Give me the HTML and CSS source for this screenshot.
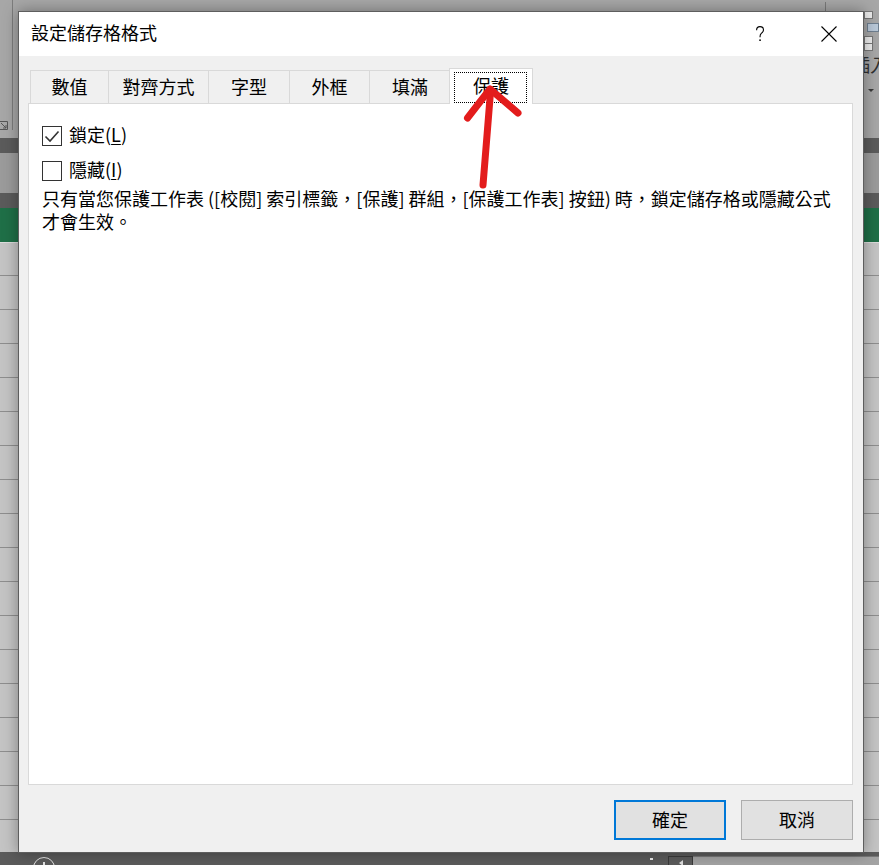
FILE: index.html
```html
<!DOCTYPE html>
<html lang="zh-Hant">
<head>
<meta charset="utf-8">
<title>設定儲存格格式</title>
<link rel="stylesheet" href="styles.css">
</head>
<body>
<div class="app">
  <div class="ribbon">
    <div class="rb-left">
      <svg class="rb-launch" width="8" height="10" viewBox="0 0 8 10"><path d="M0 1.5H7.5V9.5H0" fill="none" stroke="#555" stroke-width="1"/><path d="M1 3L6 8M6 5V8H3" fill="none" stroke="#555" stroke-width="1"/></svg>
      <div class="rb-vline"></div>
    </div>
    <div class="rb-mid"><div class="rb-tick"></div></div>
    <div class="rb-right">
      <div class="mini"></div>
      <div class="mini blue"></div>
      <div class="mini gap"></div>
      <div class="mini stack"></div>
      <div class="rb-text">插入</div>
      <div class="rb-caret"></div>
    </div>
  </div>
  <div class="band dark"></div>
  <div class="band formula"></div>
  <div class="band dark"></div>
  <div class="band green"></div>
  <div class="rows"></div>
  <div class="status">
    <div class="add-sheet"><span></span></div>
    <div class="st-dash"></div>
    <div class="st-box"><span></span></div>
    <div class="st-scroll"></div>
  </div>
</div>

<div class="dialog">
  <div class="titlebar">
    <div class="title">設定儲存格格式</div>
    <div class="tb-btn">
      <svg width="10" height="16" viewBox="0 0 10 16"><path d="M1.6 4.2C1.6 2 3.1 0.6 5 0.6C7 0.6 8.5 2 8.5 3.9C8.5 5.8 7.2 6.7 6.1 7.6C5.2 8.4 5 9.1 5 11.2" fill="none" stroke="#000" stroke-width="1.1"/><rect x="4.3" y="13.4" width="1.5" height="1.6" fill="#000"/></svg>
    </div>
    <div class="tb-btn">
      <svg width="16" height="16" viewBox="0 0 16 16"><path d="M0.5 0.5L15.5 15.5M15.5 0.5L0.5 15.5" stroke="#000" stroke-width="1.1"/></svg>
    </div>
  </div>
  <div class="body">
    <div class="tabs">
      <div class="tab w78">數值</div>
      <div class="tab w100">對齊方式</div>
      <div class="tab w81">字型</div>
      <div class="tab w80">外框</div>
      <div class="tab w81">填滿</div>
      <div class="tab active">保護</div>
    </div>
    <div class="panel">
      <div class="check-row">
        <span class="box"><svg width="18" height="18" viewBox="0 0 18 18"><path d="M2.5 9.5L7 14L15.5 4.5" fill="none" stroke="#333" stroke-width="1.6"/></svg></span>
        <span class="label">鎖定(<u>L</u>)</span>
      </div>
      <div class="check-row">
        <span class="box"></span>
        <span class="label">隱藏(<u>I</u>)</span>
      </div>
      <p class="desc"><span>只有當您保護工作表 ([校閱] 索引標籤，[保護] 群組，[保護工作表] 按鈕) 時，鎖定儲存格或隱藏公式</span><span>才會生效。</span></p>
    </div>
    <div class="footer">
      <button class="btn primary">確定</button>
      <button class="btn">取消</button>
    </div>
  </div>
</div>

<svg class="arrow" width="64" height="112" viewBox="0 0 64 112">
  <path d="M23 105L30.5 12" fill="none" stroke="#e31c1c" stroke-width="7" stroke-linecap="round"/>
  <path d="M7.5 38L30 9L58 33" fill="none" stroke="#e31c1c" stroke-width="7" stroke-linecap="round" stroke-linejoin="round"/>
</svg>
</body>
</html>
```

FILE: styles.css
```css
* { box-sizing: border-box; margin: 0; padding: 0; }
html, body { width: 879px; height: 865px; overflow: hidden; }
body {
  position: relative;
  font-family: "Noto Sans CJK TC", "Noto Sans", sans-serif;
  font-size: 18px;
  color: #000;
  background: #a8a8a8;
}

/* ---------- background (dimmed Excel) ---------- */
.app { display: flex; flex-direction: column; height: 865px; }
.ribbon { height: 138px; display: flex; background: #a7a7a7; flex: none; }
.rb-left { width: 18px; display: flex; flex: none; }
.rb-launch { align-self: flex-end; margin-bottom: 8px; flex: none; }
.rb-vline { width: 1px; height: 130px; margin-left: 4px; background: #7c7c7c; }
.rb-mid { flex: 1; display: flex; }
.rb-tick { width: 1px; height: 9px; margin-top: 2px; margin-left: 807px; background: #7a7a7a; }
.rb-right { width: 15px; flex: none; display: flex; flex-direction: column; overflow: visible; }
.mini { width: 9px; height: 8px; margin-top: 11px; border: 1px solid #777; background: #ececec; }
.mini.blue { width: 12px; height: 9px; margin-top: 4px; margin-left: 3px; background: #b9c8d8; border-color: #6f7f90; }
.mini.gap { margin-top: 4px; }
.mini.stack { margin-top: -1px; }
.rb-text { margin-top: 3px; margin-left: -12px; font-size: 18px; line-height: 20px; white-space: nowrap; color: #303030; }
.rb-caret { margin-top: 15px; margin-left: 4px; width: 0; height: 0; border-left: 3.5px solid transparent; border-right: 3.5px solid transparent; border-top: 3px solid #3a3a3a; }

.band { flex: none; }
.band.dark { height: 15px; background: #5b5b5b; }
.band.formula { height: 40px; background: #9b9b9b; }
.band.green { height: 35px; background: #1f6f47; border-bottom: 1px solid #dcdcdc; }
.rows {
  flex: 1;
  background-color: #c4c4c4;
  background-image: repeating-linear-gradient(to bottom, transparent 0 33px, #8e8e8e 33px 34px);
  background-position: 0 -1px;
}
.status { height: 13px; flex: none; background: #5b5b5b; display: flex; overflow: hidden; }
.add-sheet {
  margin-left: 33px; margin-top: 5px; width: 22px; height: 22px; flex: none;
  border: 1.5px solid #e4e4e4; border-radius: 50%;
  display: flex; justify-content: center;
}
.add-sheet span { width: 1.5px; height: 10px; margin-top: 4px; background: #e4e4e4; }
.st-dash { width: 3px; height: 2px; margin-top: 6px; margin-left: 595px; background: #eee; flex: none; }
.st-box { width: 25px; height: 12px; margin-top: 4px; margin-left: 15px; border: 1px solid #3a3a3a; flex: none; display: flex; justify-content: center; }
.st-box span { width: 0; height: 0; margin-top: 3px; border-top: 3px solid transparent; border-bottom: 3px solid transparent; border-right: 4px solid #ddd; }
.st-scroll { flex: 1; margin-top: 4px; background: #a3a3a3; border-top: 1px solid #777; }

/* ---------- dialog ---------- */
.dialog {
  position: absolute; left: 18px; top: 11px;
  width: 846px; height: 842px;
  border: 1px solid #5e5e5e;
  background: #f0f0f0;
  display: flex; flex-direction: column;
  box-shadow: 0 0 14px rgba(0, 0, 0, 0.35);
}
.titlebar { height: 44px; flex: none; background: #fff; display: flex; align-items: center; }
.title { flex: 1; padding-left: 12px; padding-bottom: 4px; font-size: 18px; line-height: 22px; color: #000; }
.tb-btn { width: 69px; height: 44px; display: flex; align-items: center; justify-content: center; }
.tb-btn svg { display: block; }

.body { flex: 1; display: flex; flex-direction: column; padding: 12px 10px 12px 9px; }

.tabs { height: 36px; margin-bottom: -1px; margin-left: 2px; display: flex; align-items: flex-end; flex: none; }
.tab {
  height: 33px; margin-bottom: 1px; padding-bottom: 3px;
  border: 1px solid #d9d9d9; border-bottom: none; border-right: none;
  display: flex; align-items: center; justify-content: center;
  font-size: 18px; line-height: 1; background: #f0f0f0; flex: none;
}
.w78 { width: 78px; }
.w100 { width: 100px; }
.w81 { width: 81px; }
.w80 { width: 80px; }
.tab.active {
  position: relative; z-index: 1;
  width: 84px; height: 36px; margin-bottom: 0; margin-left: -1px;
  background: #fff; border-right: 1px solid #d9d9d9;
  padding-bottom: 3px;
}
.tab.active::after {
  content: ""; position: absolute; left: 4px; right: 5px; top: 3px; bottom: 1px;
  border: 1px dotted #000;
}

.panel { flex: 1; background: #fff; border: 1px solid #d9d9d9; padding: 14px 13px; }
.check-row { height: 35px; display: flex; align-items: center; gap: 7px; }
.box { width: 20px; height: 20px; border: 1px solid #333; background: #fff; display: flex; flex: none; }
.box svg { display: block; }
.label { font-size: 18px; line-height: 22px; margin-bottom: 4px; }
.label u { text-underline-offset: 2px; }
.desc { font-size: 18px; line-height: 23px; margin-top: -1px; }
.desc span { display: block; white-space: nowrap; }

.footer { height: 40px; margin-top: 15px; display: flex; justify-content: flex-end; gap: 15px; flex: none; }
.btn {
  width: 112px; height: 40px; padding-bottom: 3px;
  background: #e1e1e1; border: 1px solid #adadad;
  font-family: "Noto Sans CJK TC", "Noto Sans", sans-serif;
  font-size: 18px; line-height: 1; color: #000;
}
.btn.primary { border: 2px solid #0078d7; }

.arrow { position: absolute; left: 460px; top: 80px; z-index: 5; }
```
